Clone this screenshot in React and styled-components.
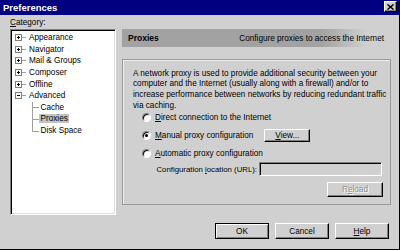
import React from 'react';
import styled, { createGlobalStyle, css } from 'styled-components';

const FONT = `"Liberation Sans", Arial, sans-serif`;
const FACE = '#d0d0d0';

const Global = createGlobalStyle`
  html, body { margin: 0; padding: 0; background: ${FACE}; }
  #root { width: 400px; height: 250px; }
`;

const Window = styled.div`
  width: 400px;
  height: 250px;
  box-sizing: border-box;
  background: ${FACE};
  border-right: 1px solid #000;
  border-bottom: 1px solid #000;
  font-family: ${FONT};
  font-size: 8.2px;
  color: #000;
  display: flex;
  flex-direction: column;
  overflow: hidden;
`;

const TitleBar = styled.div`
  height: 15px;
  flex-shrink: 0;
  background: #000080;
  display: flex;
  align-items: center;
  justify-content: space-between;
  padding: 0 2px 0 3px;
`;

const Title = styled.span`
  color: #fff;
  font-weight: bold;
  font-size: 9.5px;
`;

const CloseButton = styled.div`
  width: 13px;
  height: 11px;
  margin-top: -2px;
  box-sizing: border-box;
  background: ${FACE};
  border: 1px solid;
  border-color: #fff #000 #000 #fff;
  box-shadow: inset -1px -1px #808080;
  display: flex;
  align-items: center;
  justify-content: center;
`;

const Main = styled.div`
  display: flex;
  gap: 6px;
  padding: 0 8px 0 10px;
`;

const LeftCol = styled.div`
  width: 106px;
  display: flex;
  flex-direction: column;
`;

const Label = styled.div`
  height: 14px;
  line-height: 15px;
`;

const Key = styled.span`
  text-decoration: underline;
`;

const Tree = styled.div`
  height: 186px;
  box-sizing: border-box;
  background: #fff;
  border: 1px solid;
  border-color: #808080 #fff #fff #808080;
  box-shadow: inset 1px 1px #000, inset -1px -1px #dfdfdf;
  padding: 2px 0 0 4px;
`;

const TreeRow = styled.div`
  height: 11.6px;
  display: flex;
  align-items: center;
  white-space: nowrap;
`;

const ExpanderIcon = styled.svg`
  width: 11px;
  height: 7px;
  margin-right: 1.5px;
  flex-shrink: 0;
`;

const ChildRow = styled.div`
  position: relative;
  height: 11.6px;
  display: flex;
  align-items: center;
  padding-left: 24px;
  white-space: nowrap;
  &::before {
    content: '';
    position: absolute;
    left: 17px;
    top: 0;
    height: ${(p) => (p.$last ? '50%' : '100%')};
    border-left: 1px solid #a0a0a0;
  }
  &::after {
    content: '';
    position: absolute;
    left: 17px;
    top: 50%;
    width: 7px;
    border-top: 1px solid #a0a0a0;
  }
`;

const ItemText = styled.span`
  padding: 0 1.5px;
  line-height: 9px;
  ${(p) =>
    p.$selected &&
    css`
      background: #c4c4c4;
    `}
`;

const RightCol = styled.div`
  flex: 1;
  padding-top: 14px;
  display: flex;
  flex-direction: column;
`;

const Header = styled.div`
  height: 18px;
  display: flex;
  align-items: center;
  justify-content: space-between;
  padding: 0 7px 0 6px;
  background: linear-gradient(to right, #a2a2a2 0%, #a2a2a2 74%, ${FACE} 91%);
`;

const HeaderTitle = styled.span`
  font-weight: bold;
  font-size: 8.5px;
`;

const Group = styled.div`
  margin-top: 12px;
  height: 146px;
  box-sizing: border-box;
  border: 1px solid #9a9a9a;
  box-shadow: inset 1px 1px #eee;
  padding: 8.5px 0 0 0;
  display: flex;
  flex-direction: column;
`;

const Paragraph = styled.p`
  margin: 0;
  padding-left: 10px;
  line-height: 10.7px;
  white-space: nowrap;
`;

const RadioList = styled.div`
  display: flex;
  flex-direction: column;
  gap: 5px;
`;

const RadioRow = styled.label`
  height: 13px;
  display: flex;
  align-items: center;
  gap: 4px;
  padding-left: 19px;
  white-space: nowrap;
`;

const Radio = styled.span`
  width: 9px;
  height: 9px;
  box-sizing: border-box;
  border-radius: 50%;
  background: #fff;
  border: 1px solid;
  border-color: #808080 #fff #fff #808080;
  box-shadow: inset 1px 1px #000;
  display: flex;
  align-items: center;
  justify-content: center;
  flex-shrink: 0;
  &::after {
    content: '';
    width: 3px;
    height: 3px;
    border-radius: 50%;
    background: ${(p) => (p.$checked ? '#000' : 'transparent')};
  }
`;

const ConfigRow = styled.div`
  margin-top: 2px;
  height: 14px;
  display: flex;
  align-items: center;
  gap: 2px;
  padding-left: 32px;
`;

const ConfigLabel = styled.span`
  width: 102px;
  text-align: right;
  white-space: nowrap;
  font-size: 7.8px;
`;

const Field = styled.div`
  width: 123px;
  height: 14px;
  box-sizing: border-box;
  background: ${FACE};
  border: 1px solid;
  border-color: #808080 #fff #fff #808080;
  box-shadow: inset 1px 1px #000;
`;

const ReloadRow = styled.div`
  margin-top: 6px;
  display: flex;
  justify-content: flex-end;
  padding-right: 7px;
`;

const Button = styled.div`
  width: ${(p) => p.$w || 54}px;
  height: ${(p) => p.$h || 16}px;
  box-sizing: border-box;
  background: ${FACE};
  border: 1px solid;
  border-color: ${(p) => (p.$default ? '#000' : '#fff #000 #000 #fff')};
  box-shadow: ${(p) =>
    p.$default
      ? 'inset 1px 1px #fff, inset -1px -1px #808080'
      : 'inset -1px -1px #808080'};
  display: flex;
  align-items: center;
  justify-content: center;
  white-space: nowrap;
  ${(p) =>
    p.$disabled &&
    css`
      color: #909090;
      text-shadow: 1px 1px #fff;
    `}
`;

const ViewButton = styled(Button)`
  margin-left: 7px;
`;

const ButtonRow = styled.div`
  margin-top: 8px;
  display: flex;
  justify-content: flex-end;
  gap: 6px;
  padding-right: 10px;
`;

function Expander({ open }) {
  return (
    <ExpanderIcon viewBox="0 0 11 7">
      <rect x="0.5" y="0.5" width="6" height="6" fill="#fff" stroke="#808080" />
      <line x1="2" y1="3.5" x2="5" y2="3.5" stroke="#000" />
      {!open && <line x1="3.5" y1="2" x2="3.5" y2="5" stroke="#000" />}
      <line x1="7" y1="3.5" x2="11" y2="3.5" stroke="#a0a0a0" />
    </ExpanderIcon>
  );
}

const topItems = ['Appearance', 'Navigator', 'Mail & Groups', 'Composer', 'Offline'];
const children = ['Cache', 'Proxies', 'Disk Space'];

export default function App() {
  return (
    <>
      <Global />
      <Window>
        <TitleBar>
          <Title>Preferences</Title>
          <CloseButton>
            <svg width="7" height="6" viewBox="0 0 7 6">
              <path d="M0.5 0.5 L6.5 5.5 M6.5 0.5 L0.5 5.5" stroke="#000" strokeWidth="1.5" />
            </svg>
          </CloseButton>
        </TitleBar>
        <Main>
          <LeftCol>
            <Label>
              <Key>C</Key>ategory:
            </Label>
            <Tree>
              {topItems.map((t) => (
                <TreeRow key={t}>
                  <Expander />
                  <ItemText>{t}</ItemText>
                </TreeRow>
              ))}
              <TreeRow>
                <Expander open />
                <ItemText>Advanced</ItemText>
              </TreeRow>
              {children.map((c, i) => (
                <ChildRow key={c} $last={i === children.length - 1}>
                  <ItemText $selected={c === 'Proxies'}>{c}</ItemText>
                </ChildRow>
              ))}
            </Tree>
          </LeftCol>
          <RightCol>
            <Header>
              <HeaderTitle>Proxies</HeaderTitle>
              <span>Configure proxies to access the Internet</span>
            </Header>
            <Group>
              <Paragraph>
                A network proxy is used to provide additional security between your
                <br />
                computer and the Internet (usually along with a firewall) and/or to
                <br />
                increase performance between networks by reducing redundant traffic
                <br />
                via caching.
              </Paragraph>
              <RadioList>
                <RadioRow>
                  <Radio />
                  <span>
                    <Key>D</Key>irect connection to the Internet
                  </span>
                </RadioRow>
                <RadioRow>
                  <Radio $checked />
                  <span>
                    <Key>M</Key>anual proxy configuration
                  </span>
                  <ViewButton $w={46} $h={13}>
                    <span>
                      <Key>V</Key>iew...
                    </span>
                  </ViewButton>
                </RadioRow>
                <RadioRow>
                  <Radio />
                  <span>
                    <Key>A</Key>utomatic proxy configuration
                  </span>
                </RadioRow>
              </RadioList>
              <ConfigRow>
                <ConfigLabel>
                  Configuration <Key>l</Key>ocation (URL):
                </ConfigLabel>
                <Field />
              </ConfigRow>
              <ReloadRow>
                <Button $w={56} $h={15} $disabled>
                  <span>
                    R<Key>e</Key>load
                  </span>
                </Button>
              </ReloadRow>
            </Group>
          </RightCol>
        </Main>
        <ButtonRow>
          <Button $default>OK</Button>
          <Button>Cancel</Button>
          <Button>
            <span>
              <Key>H</Key>elp
            </span>
          </Button>
        </ButtonRow>
      </Window>
    </>
  );
}
